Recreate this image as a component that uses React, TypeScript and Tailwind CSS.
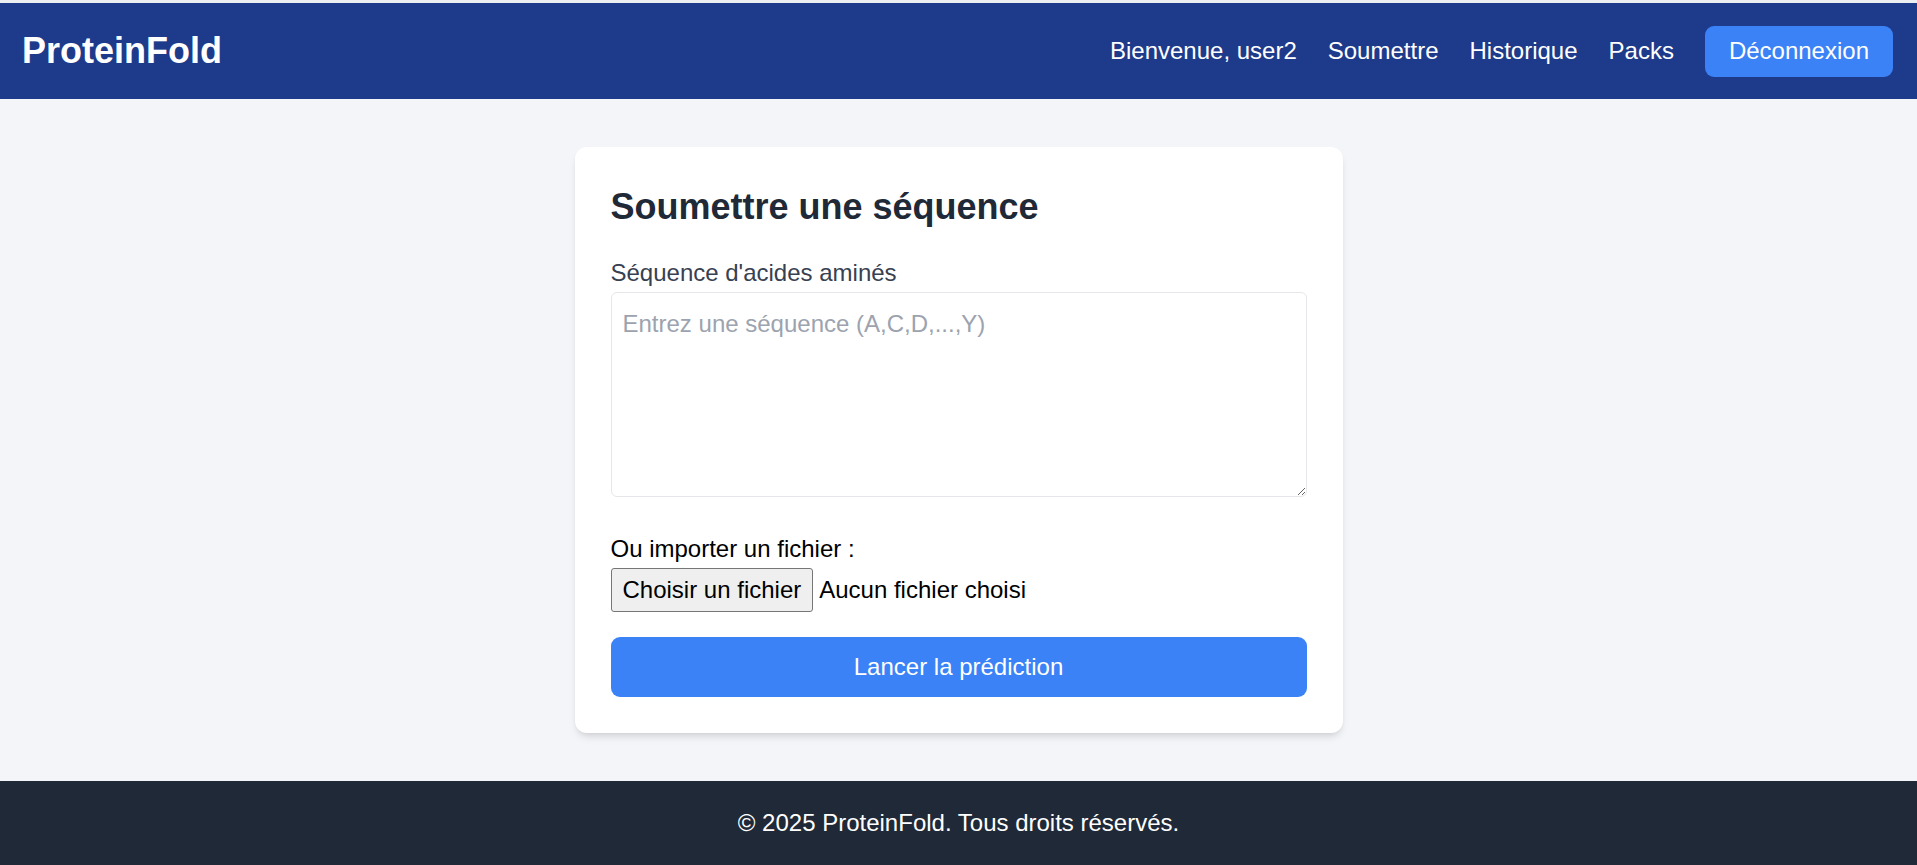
function Header() {
  return (
    <header className="bg-[#1e3a8a] text-white h-[96px] pl-[22px] pr-[24px] flex items-center justify-between">
      <div className="text-[36px] leading-[48px] font-bold">ProteinFold</div>
      <nav className="flex items-center gap-[31px] text-[24px] leading-[36px]">
        <span>Bienvenue, user2</span>
        <a href="#">Soumettre</a>
        <a href="#">Historique</a>
        <a href="#">Packs</a>
        <button className="bg-[#3b82f6] h-[51px] px-[24px] rounded-[9px] text-white">
          Déconnexion
        </button>
      </nav>
    </header>
  );
}

function SubmitCard() {
  return (
    <div className="w-[768px] bg-white rounded-[12px] p-[36px] shadow-[0_6px_9px_-2px_rgba(0,0,0,0.1),0_3px_6px_-3px_rgba(0,0,0,0.1)]">
      <h2 className="text-[36px] leading-[48px] font-bold text-[#1f2937] mb-[24px]">
        Soumettre une séquence
      </h2>

      <label className="block text-[24px] leading-[36px] text-[#374151] mb-[1px]">
        Séquence d'acides aminés
      </label>
      <textarea
        className="block w-full h-[205px] border border-[#e5e7eb] rounded-[6px] pt-[13px] pl-[11px] pr-[12px] text-[24px] leading-[36px] placeholder:text-[#9ca3af] outline-none"
        placeholder="Entrez une séquence (A,C,D,...,Y)"
      />

      <label className="block mt-[34px] text-[24px] leading-[36px] text-black">
        Ou importer un fichier :
      </label>
      <div className="flex items-center h-[44px] mt-[1px] text-[24px] text-black">
        <button className="h-[44px] px-[11px] bg-[#efefef] border border-[#767676] rounded-[3px]">
          Choisir un fichier
        </button>
        <span className="ml-[6px]">Aucun fichier choisi</span>
      </div>

      <button className="mt-[25px] w-full h-[60px] bg-[#3b82f6] text-white text-[24px] rounded-[9px]">
        Lancer la prédiction
      </button>
    </div>
  );
}

export default function App() {
  return (
    <div className="min-h-screen flex flex-col bg-[#f4f5f8] font-['Liberation_Sans',Arial,sans-serif]">
      <div className="h-[3px] bg-[#eceef1]" />
      <Header />
      <main className="flex-1 flex justify-center py-[48px]">
        <SubmitCard />
      </main>
      <footer className="bg-[#1f2937] text-white text-center text-[24px] leading-[36px] py-[24px]">
        © 2025 ProteinFold. Tous droits réservés.
      </footer>
    </div>
  );
}
